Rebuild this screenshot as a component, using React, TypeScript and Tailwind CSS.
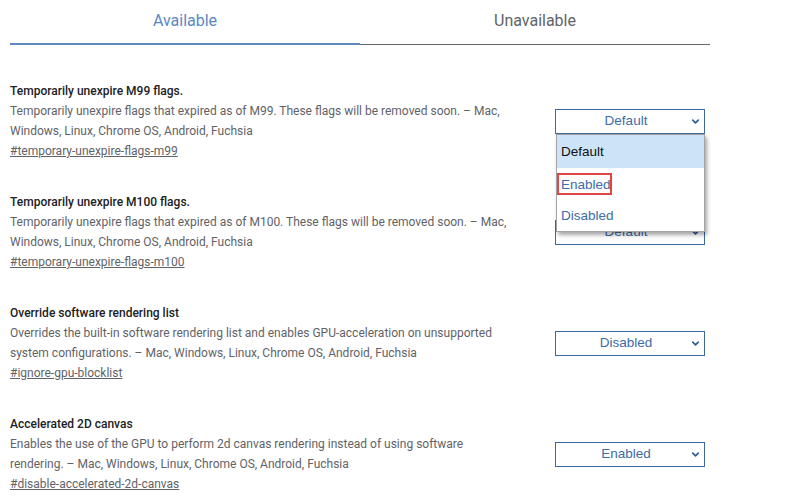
import React from 'react';
import { ChevronDown } from 'lucide-react';

type Flag = {
  name: string;
  description: string;
  link: string;
  value: string;
  open?: boolean;
};

const flags: Flag[] = [
  {
    name: 'Temporarily unexpire M99 flags.',
    description:
      'Temporarily unexpire flags that expired as of M99. These flags will be removed soon. – Mac, Windows, Linux, Chrome OS, Android, Fuchsia',
    link: '#temporary-unexpire-flags-m99',
    value: 'Default',
    open: true,
  },
  {
    name: 'Temporarily unexpire M100 flags.',
    description:
      'Temporarily unexpire flags that expired as of M100. These flags will be removed soon. – Mac, Windows, Linux, Chrome OS, Android, Fuchsia',
    link: '#temporary-unexpire-flags-m100',
    value: 'Default',
  },
  {
    name: 'Override software rendering list',
    description:
      'Overrides the built-in software rendering list and enables GPU-acceleration on unsupported system configurations. – Mac, Windows, Linux, Chrome OS, Android, Fuchsia',
    link: '#ignore-gpu-blocklist',
    value: 'Disabled',
  },
  {
    name: 'Accelerated 2D canvas',
    description:
      'Enables the use of the GPU to perform 2d canvas rendering instead of using software rendering. – Mac, Windows, Linux, Chrome OS, Android, Fuchsia',
    link: '#disable-accelerated-2d-canvas',
    value: 'Enabled',
  },
];

// the open option list of the first select, with the red annotation box
function OptionList() {
  return (
    <div className="absolute left-[1px] top-[25px] z-20 w-[149px] border border-[#a3a3a3] bg-white text-[13.5px] shadow-[2px_3px_4px_rgba(0,0,0,0.35)]">
      <div className="h-[33px] bg-[#cce3f8] pl-[4px] pt-[1px] leading-[32px] text-[#111]">Default</div>
      <div className="relative h-[32px] pl-[4px] pt-[1px] leading-[32px] text-[#3d6ca6]">
        Enabled
        <span className="absolute left-[0px] top-[5px] h-[22px] w-[55px] border-2 border-[#e0463f]" />
      </div>
      <div className="h-[31px] pl-[4px] leading-[32px] text-[#3d6ca6]">Disabled</div>
    </div>
  );
}

function FlagSelect({ value, open }: { value: string; open?: boolean }) {
  return (
    <div className={`relative w-[150px] shrink-0 ${open ? 'z-20' : 'z-0'}`} style={{ fontFamily: '"Liberation Sans", Arial, sans-serif' }}>
      <div className="relative flex h-[25px] items-center justify-center border border-[#3c68a0] bg-white pr-[8px] text-[13.5px] text-[#3d6ca6]">
        {value}
        <ChevronDown size={11} strokeWidth={3.5} className="absolute right-[3px] top-[6px] text-[#2f5b92]" />
      </div>
      {open && <OptionList />}
    </div>
  );
}

export default function App() {
  return (
    <div className="min-h-screen bg-white pl-[10px]" style={{ fontFamily: 'Roboto, "Noto Sans", sans-serif' }}>
      <div className="flex w-[700px]">
        <div className="h-[45px] w-[350px] border-b-2 border-[#5e8bbf] pt-[10px] text-center text-[16px] leading-[22px] text-[#5b88c3]">
          Available
        </div>
        <div className="h-[45px] w-[350px] border-b border-[#666] pt-[10px] text-center text-[16px] leading-[22px] text-[#5f6368]">
          Unavailable
        </div>
      </div>

      <div className="mt-[36px] flex w-[695px] flex-col gap-[31px]">
        {flags.map((f) => (
          <div key={f.link} className="flex items-center justify-between">
            <div className="w-[500px] text-[12px] leading-[20px]">
              <div className="font-medium text-[#202124]">{f.name}</div>
              <p className="text-[#5f6368]">{f.description}</p>
              <a className="text-[#5f6368] underline">{f.link}</a>
            </div>
            <FlagSelect value={f.value} open={f.open} />
          </div>
        ))}
      </div>
    </div>
  );
}
